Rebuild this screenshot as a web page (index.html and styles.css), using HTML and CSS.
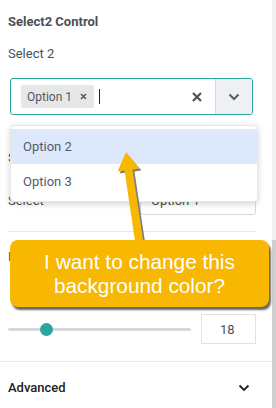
FILE: index.html
```html
<!DOCTYPE html>
<html>
<head>
<meta charset="utf-8">
<link rel="stylesheet" href="styles.css">
</head>
<body>
<div class="page">
  <div class="panel">
    <div class="section">
      <div class="title">Select2 Control</div>
      <div class="label">Select 2</div>
      <div class="s2">
        <div class="s2-main">
          <span class="tag">Option 1
            <svg class="tag-x" width="7" height="7" viewBox="0 0 7 7"><path d="M1 1L6 6M6 1L1 6" stroke="#55595f" stroke-width="1.6"/></svg>
          </span>
          <span class="caret"></span>
        </div>
        <div class="s2-clear">
          <svg width="10" height="10" viewBox="0 0 10 10"><path d="M1 1L9 9M9 1L1 9" stroke="#4f5358" stroke-width="2.2"/></svg>
        </div>
        <div class="s2-arrow">
          <svg width="12" height="8" viewBox="0 0 12 8"><path d="M1.5 1.5L6 6L10.5 1.5" fill="none" stroke="#555e69" stroke-width="2"/></svg>
        </div>
      </div>
      <div class="label hidden-label">Select Control</div>
      <div class="row">
        <span class="row-label">Select</span>
        <div class="plain-select">
          <span>Option 1</span>
          <svg width="9" height="6" viewBox="0 0 9 6"><path d="M0 0L9 0L4.5 5Z" fill="#555"/></svg>
        </div>
      </div>
    </div>
    <div class="section second">
      <div class="label">Font Size</div>
      <div class="slider-row">
        <div class="slider"><div class="track"></div><div class="thumb"></div></div>
        <div class="num">18</div>
      </div>
    </div>
    <div class="advanced">
      <span>Advanced</span>
      <svg width="12" height="8" viewBox="0 0 12 8"><path d="M1.5 1.5L6 6L10.5 1.5" fill="none" stroke="#1f2124" stroke-width="1.8"/></svg>
    </div>
  </div>
  <div class="scrollbar"><div class="thumb-bar"></div></div>

  <div class="dropdown">
    <div class="opt active">Option 2</div>
    <div class="opt">Option 3</div>
  </div>

  <svg class="arrow" width="276" height="408" viewBox="0 0 276 408">
    <polygon points="128,155 119.6,173.5 126.5,172.6 137,243 145,242 134.5,171.4 141.4,170.5" fill="#4a4a4a" opacity="0.7"/>
    <polygon points="126,152 117.6,171.5 124.5,170.6 135,241 143,240 132.5,169.4 139.4,168.5" fill="#f8b700"/>
  </svg>

  <div class="callout">I want to change this<br>background color?</div>
</div>
</body>
</html>
```

FILE: styles.css
```css
html, body {
  margin: 0;
  padding: 0;
  background: #fff;
}
.page {
  position: relative;
  width: 276px;
  height: 408px;
  overflow: hidden;
  display: flex;
  font-family: Roboto, "Noto Sans", sans-serif;
  color: #495157;
}
.panel {
  width: 272px;
  display: flex;
  flex-direction: column;
}
.section {
  display: flex;
  flex-direction: column;
  border-bottom: 1px solid #e6e8ea;
  margin: 0 16px 0 8px;
  padding: 14px 0 0 0;
}
.title {
  font-size: 13px;
  line-height: 16px;
  font-weight: 700;
  color: #495157;
}
.label {
  margin-top: 16px;
  font-size: 13px;
  line-height: 16px;
}
.s2 {
  margin: 16px 3px 0 2px;
  height: 35px;
  border: 1px solid #2ca59d;
  border-radius: 3px;
  display: flex;
  align-items: stretch;
  overflow: hidden;
}
.s2-main {
  flex: 1;
  display: flex;
  align-items: center;
  padding-left: 10px;
  gap: 5px;
}
.tag {
  display: flex;
  align-items: center;
  gap: 8px;
  background: #e6e7e9;
  border-radius: 2px;
  height: 23px;
  padding: 0 7px 0 6px;
  font-size: 12px;
  color: #515962;
}
.caret {
  width: 1px;
  height: 15px;
  background: #222;
}
.s2-clear {
  width: 36px;
  display: flex;
  align-items: center;
  justify-content: center;
}
.s2-arrow {
  width: 36px;
  background: #eef0f3;
  border-left: 1px solid #d5d8dc;
  display: flex;
  align-items: center;
  justify-content: center;
}
.hidden-label {
  margin-top: 35px;
}
.row {
  margin-top: 19px;
  margin-bottom: 16px;
  height: 30px;
  display: flex;
  align-items: center;
  justify-content: space-between;
  font-size: 13px;
}
.plain-select {
  width: 116px;
  height: 30px;
  box-sizing: border-box;
  border: 1px solid #d5dadf;
  border-radius: 3px;
  display: flex;
  align-items: center;
  justify-content: space-between;
  padding: 0 8px 0 10px;
  font-size: 13px;
}
.second {
  margin: 0;
  padding-top: 17px;
  padding-left: 8px;
  border-bottom: 1px solid #e6e8ea;
}
.second .label {
  margin-top: 0;
}
.slider-row {
  margin-top: 49px;
  margin-bottom: 17px;
  margin-right: 16px;
  display: flex;
  align-items: center;
  gap: 10px;
  height: 30px;
}
.slider {
  position: relative;
  width: 183px;
  height: 13px;
  display: flex;
  align-items: center;
}
.track {
  width: 100%;
  height: 3px;
  background: #d5dadf;
  border-radius: 2px;
}
.thumb {
  position: absolute;
  left: 32px;
  top: 0;
  width: 13px;
  height: 13px;
  border-radius: 50%;
  background: #2ca59d;
}
.num {
  width: 55px;
  height: 30px;
  box-sizing: border-box;
  border: 1px solid #e0e3e6;
  font-size: 13px;
  display: flex;
  align-items: center;
  padding-left: 18px;
  color: #495157;
}
.advanced {
  display: flex;
  align-items: center;
  justify-content: space-between;
  padding: 18px 22px 0 8px;
  font-size: 13px;
  font-weight: 500;
  color: #1f2124;
  line-height: 16px;
}
.scrollbar {
  width: 4px;
  height: 408px;
  background: #f1f1f1;
}
.thumb-bar {
  margin-top: 240px;
  height: 168px;
  background: #cfcfcf;
}
.dropdown {
  position: absolute;
  left: 10px;
  top: 125px;
  width: 248px;
  box-sizing: border-box;
  background: #fff;
  border: 1px solid #e8e8e8;
  border-radius: 4px;
  box-shadow: 0 2px 6px rgba(0,0,0,0.18);
  padding: 3px 0 2px;
}
.opt {
  height: 35px;
  line-height: 35px;
  padding-left: 12px;
  font-size: 13px;
  color: #515a6e;
}
.opt.active {
  background: #dde8fb;
}
.arrow {
  position: absolute;
  left: 0;
  top: 0;
}
.callout {
  position: absolute;
  left: 10px;
  top: 240px;
  width: 259px;
  height: 67px;
  box-sizing: border-box;
  background: #f8b700;
  border-radius: 8px;
  box-shadow: 2px 3px 2px rgba(0,0,0,0.6);
  color: #fff;
  font-family: "Liberation Sans", Arial, sans-serif;
  font-size: 20.8px;
  line-height: 24px;
  text-align: center;
  padding-top: 10px;
}
```
